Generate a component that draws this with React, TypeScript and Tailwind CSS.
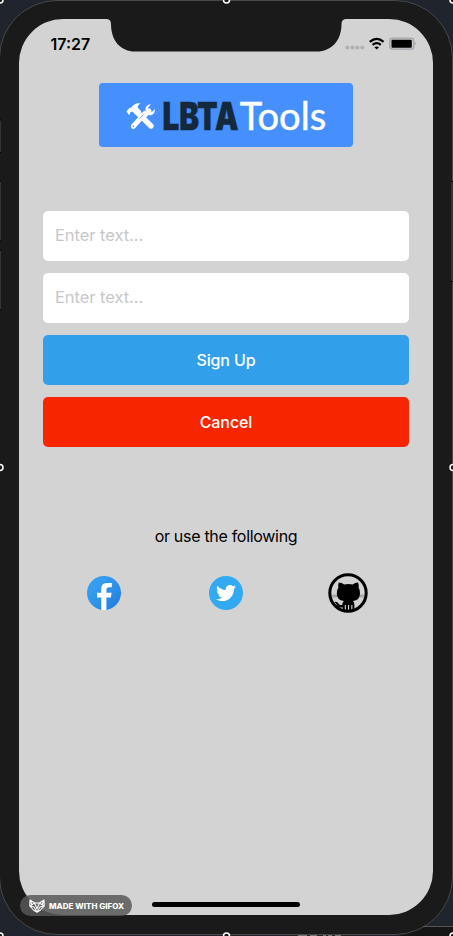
import { FaTwitter } from "react-icons/fa";

const font = "font-['Inter','Liberation_Sans',sans-serif]";

function Logo() {
  return (
    <svg className="mx-auto block h-16 w-[254px] shrink-0 rounded-[4px] bg-[#458fff]" viewBox="99 83 254 64">
      <g fill="none" stroke="#fff" strokeLinecap="round">
        <path d="M133.300 126.300L145 113.500" strokeWidth="5" />
        <path d="M151 126L136.500 111.500" strokeWidth="5.400" />
        <path d="M144.500 115.500L149 111" strokeWidth="5" />
      </g>
      <path fill="#fff" d="M126.400 111.300l3.200-3.500 1 .2 3.300-3.300q3.200-2 6.800-1.200-3.200 1.300-2.900 4.200l3.400 3.500-4.500 4.500-4.300-4.300-2.300 1-.1 1.600-1 .9z" />
      <path fill="#fff" d="M150.800 104.100q-4.400.4-5.400 4.800-.4 3 1.400 5 2 2 4.700 1.100 3.400-.9 3.500-6l-3.400 3.200-3.100-.8-.7-3.200z" />
      <path d="M139.300 118.800l4.200-4.400" stroke="#458fff" strokeWidth=".8" />
      <circle cx="133.500" cy="126.200" r=".8" fill="#458fff" />
      <text x="162.500" y="129.700" fontFamily="Inter, sans-serif" fontWeight="900" fontSize="38" textLength="76" lengthAdjust="spacingAndGlyphs" fill="#14293c" stroke="#14293c" strokeWidth=".5">LBTA</text>
      <text x="239.700" y="130" fontFamily="Lato, sans-serif" fontWeight="400" fontSize="39" textLength="86.500" lengthAdjust="spacingAndGlyphs" fill="#fff" stroke="#fff" strokeWidth=".5">Tools</text>
    </svg>
  );
}

function Facebook() {
  return (
    <svg className="size-[34px]" viewBox="0 0 34 34">
      <defs>
        <linearGradient id="fb" x1="0" y1="0" x2="1" y2="1">
          <stop offset=".3" stopColor="#349df0" />
          <stop offset="1" stopColor="#207bd9" />
        </linearGradient>
      </defs>
      <circle cx="17" cy="17" r="17" fill="url(#fb)" />
      <path fill="#fff" d="M14.200 33.800V21.500h-4.200v-4.800h4.200V13c0-4 2.200-6 6-6h4.600v4.200h-2.600c-2 0-2.800.9-2.800 2.700v2.800h5.200l-.8 4.800h-4.400V33.800q-2.600.4-5.200 0z" />
    </svg>
  );
}

function Github() {
  return (
    <svg className="size-10" viewBox="0 0 40 40">
      <circle cx="20" cy="20" r="18.200" fill="none" stroke="#000" strokeWidth="3" />
      <path d="M10.800 9.500q3.200.2 5.300 1.900 4.200-.8 8.600 0 2.100-1.700 5.300-1.900 1.200 2.500.6 5Q32 16.800 32 20.200q0 6.900-7 7.900 1.400 1.400 1.400 3.800v5h-2V32h-1.100v6h-2.200v-6H20v6h-2.100v-6h-1.100v5.200h-2v-2.800q-5 .8-6.200-3-.6-1.700-2.600-2.500 3.400-.8 5 2 1 1.500 3.200.8.200-2.200 1.700-3.600-7.100-1-7.100-7.900 0-3.400 1.600-5.700-.7-2.600.4-5z" />
      <path d="M3 22.300l7-.1M3.500 24.300l7-1M37 22.300l-7-.1M36.500 24.300l-7-1" stroke="#000" strokeWidth=".3" />
    </svg>
  );
}

function StatusBar() {
  return (
    <div className="flex h-16 shrink-0 items-start justify-between pt-[17px] pr-[17px] pl-[31.500px]">
      <span className="text-[16px] leading-4 font-semibold">17:27</span>
      <svg className="h-4 w-[72px]" viewBox="344 36 72 16">
        <g fill="#b0b0b3">
          <circle cx="347.300" cy="47.500" r="2" />
          <circle cx="352.300" cy="47.500" r="2" />
          <circle cx="357.300" cy="47.500" r="2" />
          <circle cx="362.300" cy="47.500" r="2" />
        </g>
        <path d="M369.800 41.900q6.900-6 13.800 0M372.600 44.900q4.100-3.500 8.200 0" fill="none" stroke="#000" strokeWidth="2.300" />
        <path d="M374.400 47.300q2.300-1.800 4.600 0l-2.300 2.200z" />
        <rect x="389.800" y="38.200" width="24" height="11" rx="2.800" fill="#c8c8cc" stroke="#a5a5ab" strokeWidth="1.300" />
        <rect x="391.500" y="39.800" width="20.300" height="8" rx="1" />
        <path d="M414.800 41.500q2 2 0 4z" fill="#a5a5ab" />
      </svg>
    </div>
  );
}

function GifoxBadge() {
  return (
    <div className="absolute top-[895px] left-5 flex h-[21px] w-28 items-center rounded-full bg-[#585858]/85 pl-[9px] text-white">
      <svg className="h-[14px] w-4 shrink-0" viewBox="0 0 16 14" fill="none" stroke="currentColor" strokeWidth="1.100" strokeLinejoin="round">
        <path d="M1 1l4.500 3h5L15 1l.2 6-3.700 4L8 13.300 4.500 11 .8 7zM1 7l4.500-3L8 10l2.500-6L15 7M1 7l4 1 3 5 3-5 4-1M1 1l2 5M15 1l-2 5" />
      </svg>
      <svg className="ml-1 h-3 w-[76px]" viewBox="0 0 76 12">
        <text x="0" y="8.700" fill="#fff" fontFamily="Inter, sans-serif" fontSize="7" fontWeight="800" textLength="75" lengthAdjust="spacingAndGlyphs">MADE WITH GIFOX</text>
      </svg>
    </div>
  );
}

function PhoneEdge() {
  return (
    <svg className="pointer-events-none absolute inset-0" width="453" height="936" viewBox="0 0 453 936" fill="none">
      <path d="M106 19q5 0 5 5C111 41 121 51.500 135 51.500H317C331 51.500 341.500 41 341.500 24q0-5 5-5V18H106z" fill="#1a1a1a" />
      <path d="M0 121h1v31H0zM0 182h1v58H0zM0 251h1v58H0zM451 182h2v98h-2z" fill="#353535" />
      <path d="M0 119h1M0 152.500h1M0 181h1M0 241h1M0 250h1M0 310h1M451 181.500h2M451 281.500h2" stroke="#000" />
      <path d="M423 926.500h30" stroke="#555" />
      <path d="M425 927h28v9h-55q16-3 27-9z" fill="#151515" />
      <path d="M298 935.500h9m3 0h7m6 0h3m2 0h4m3 0h6" stroke="#777" />
      <g stroke="#fff" strokeWidth="1.500" fill="#1a1a1a">
        <circle cx="0" cy="0" r="3" />
        <circle cx="226.500" cy="0" r="3" />
        <circle cx="453" cy="0" r="3" />
        <circle cx="0" cy="467.500" r="3" />
        <circle cx="453" cy="467.500" r="3" />
        <circle cx="0" cy="936" r="3" />
        <circle cx="226.500" cy="936" r="3" />
        <circle cx="453" cy="936" r="3" />
      </g>
    </svg>
  );
}

export default function App() {
  const input = "h-[50px] w-full rounded-[5px] bg-white px-3 pb-0.5 text-[16.5px] tracking-[-0.05px] text-black outline-none placeholder:text-[#c7c7ca]";
  const button = "h-[50px] w-full rounded-[5px] text-[16px] font-medium tracking-[-0.1px] text-white";
  return (
    <div className={`relative h-[936px] w-[453px] overflow-hidden bg-[#20242c] ${font}`}>
      <div className="-ml-px h-[935px] w-[454px] rounded-[58px] border border-[#484848] bg-[#1a1a1a] pt-[18px] pl-[19px]">
        <main className="flex h-[896px] w-[414px] flex-col rounded-[44px] bg-[#d3d3d3] text-black">
          <StatusBar />
          <Logo />
          <form className="mt-16 flex flex-col gap-3 px-6" onSubmit={(e) => e.preventDefault()}>
            <input className={input} placeholder="Enter text..." />
            <input className={input} placeholder="Enter text..." />
            <button className={`${button} bg-[#319fe9]`}>Sign Up</button>
            <button className={`${button} bg-[#f82600]`}>Cancel</button>
          </form>
          <p className="mt-[77px] text-center text-[16px] leading-6 tracking-[-0.3px]">or use the following</p>
          <div className="mt-[25px] grid h-10 grid-cols-3 place-items-center px-6">
            <Facebook />
            <span className="flex size-[34px] items-center justify-center rounded-full bg-[#32aaf2] text-white">
              <FaTwitter size={20} />
            </span>
            <Github />
          </div>
          <div className="mx-auto mt-auto mb-2 h-[5px] w-[148px] rounded-full bg-black" />
        </main>
      </div>
      <PhoneEdge />
      <GifoxBadge />
    </div>
  );
}
